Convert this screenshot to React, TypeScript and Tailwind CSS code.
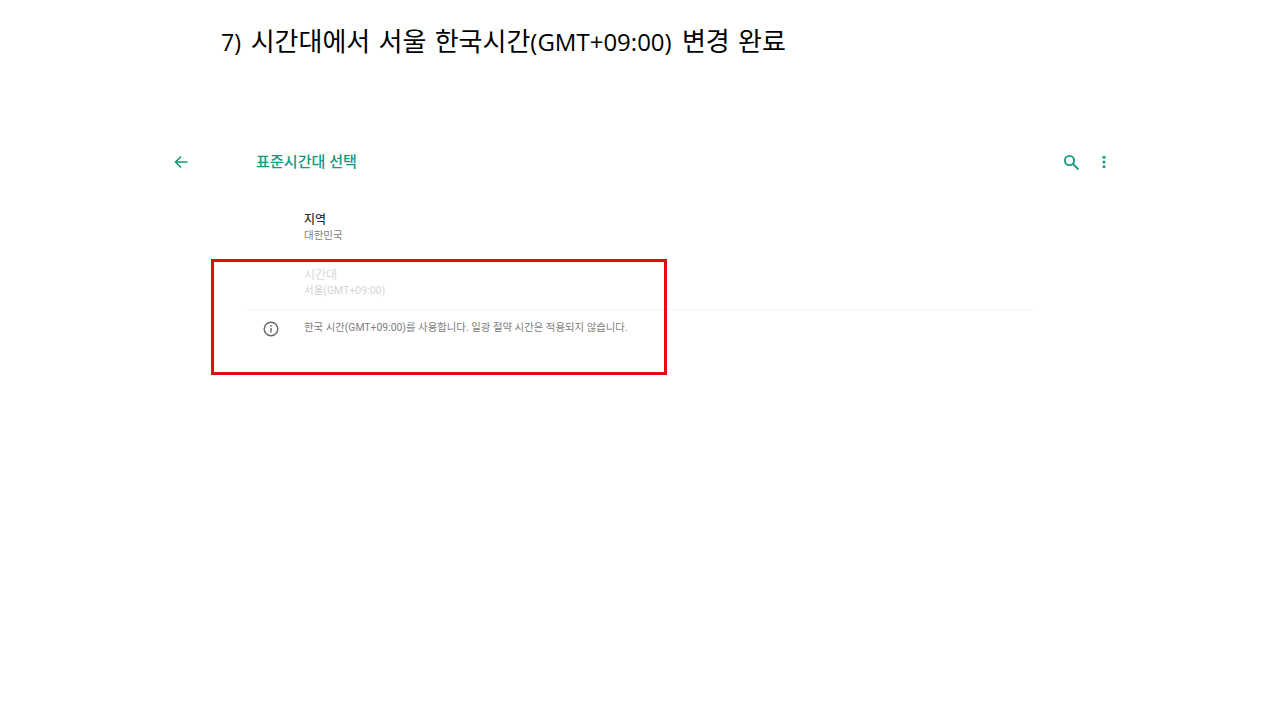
import React from "react";

const font = { fontFamily: '"Roboto", "Noto Sans CJK KR", sans-serif' };

export default function App() {
  return (
    <div className="relative w-[1280px] h-[720px] overflow-hidden bg-white" style={font}>
      <h1 className="pl-[221px] pt-[24px] h-[96px] text-[26px] leading-[34px] font-normal text-black whitespace-pre [font-family:'Open_Sans','Noto_Sans_CJK_KR',sans-serif] [word-spacing:1.5px]">
        <span className="text-[23px] mr-[1.5px]">7)</span> 시간대에서 서울 한국시간<span className="text-[24px] mr-[2px] [word-spacing:0]">(GMT+09:00)</span> 변경 완료
      </h1>

      <div className="pt-[51px] pl-[173px] pr-[174px]">
        <header className="flex items-center h-[30px] text-[#129a7c]">
          <svg width="16" height="16" viewBox="0 0 16 16" fill="none" stroke="currentColor" strokeWidth="1.6" className="shrink-0">
            <path d="M14.5 8H2.5M8 2.5 2.5 8 8 13.5" />
          </svg>
          <span className="ml-[67px] pt-[1px] text-[15.1px] font-medium">표준시간대 선택</span>
          <div className="ml-auto flex items-center gap-[22px]">
            <svg width="17" height="17" viewBox="0 0 17 17" fill="none" stroke="currentColor" strokeWidth="1.8">
              <circle cx="6.5" cy="6.5" r="4.6" />
              <path d="M10 10l5.5 5.5" />
            </svg>
            <svg width="4" height="14" viewBox="0 0 4 14" fill="currentColor">
              <circle cx="2" cy="2.2" r="1.5" />
              <circle cx="2" cy="7" r="1.5" />
              <circle cx="2" cy="11.8" r="1.5" />
            </svg>
          </div>
        </header>

        <section className="ml-[71px] mr-[70px] mt-[35px]">
          <div className="pl-[60px]">
            <div className="text-[12px] leading-[16px] font-medium text-[#333333]">지역</div>
            <div className="text-[10.5px] leading-[14px] mt-[1px] text-[#808080]">대한민국</div>
          </div>
          <div className="pl-[60px] pt-[24px] pb-[11px] border-b border-[#f5f5f5]">
            <div className="text-[12px] leading-[16px] text-[#d8d8d8]">시간대</div>
            <div className="text-[10.5px] leading-[14px] mt-[1px] text-[#d4d4d4]">서울(GMT+09:00)</div>
          </div>
          <div className="flex items-start pt-[11px] pl-[19px]">
            <svg width="16" height="16" viewBox="0 0 16 16" fill="none" stroke="#666666" strokeWidth="1.4" className="shrink-0">
              <circle cx="8" cy="8" r="6.8" />
              <path d="M8 7v4.4" />
              <circle cx="8" cy="4.8" r="0.9" fill="#666666" stroke="none" />
            </svg>
            <span className="ml-[25px] text-[10.4px] leading-[14px] text-[#808080]">
              한국 시간(GMT+09:00)를 사용합니다. 일광 절약 시간은 적용되지 않습니다.
            </span>
          </div>
        </section>
      </div>

      <div className="absolute left-[211px] top-[259px] w-[456px] h-[116px] border-[3px] border-[#e01010]" />
    </div>
  );
}
